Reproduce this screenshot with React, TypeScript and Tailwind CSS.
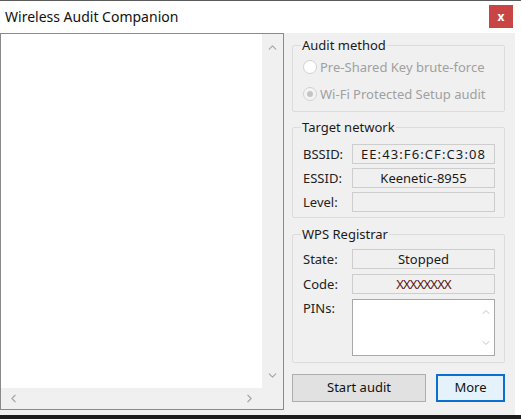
import React from "react";
import { ChevronUp, ChevronDown, ChevronLeft, ChevronRight } from "lucide-react";

const font = { fontFamily: '"Noto Sans", "Open Sans", sans-serif' };

function Field({ text, className = "" }: { text?: string; className?: string }) {
  return (
    <div
      className={
        "w-[143px] h-[20px] border border-[#cdcdcd] bg-[#f0f0f0] flex items-center justify-center text-[13px] text-[#1a1a1a] leading-none " +
        className
      }
    >
      {text}
    </div>
  );
}

function Row({ label, children }: { label: string; children: React.ReactNode }) {
  return (
    <div className="flex items-center">
      <div className="w-[49px] text-[13px] text-[#222] leading-none">{label}</div>
      {children}
    </div>
  );
}

export default function App() {
  return (
    <div className="w-[521px] h-[419px] bg-white overflow-hidden flex flex-col" style={font}>
      <div className="h-px bg-[#5b5b5b] shrink-0" />
      <div className="h-[32px] shrink-0 flex items-start justify-between pl-[5px] pr-[8px] pt-[4px] bg-white">
        <span className="text-[14px] text-[#111] leading-[20px] mt-[2px]">Wireless Audit Companion</span>
        <div className="w-[24px] h-[23px] bg-[#c94545] flex items-center justify-center text-white text-[12px] font-bold leading-none">
          x
        </div>
      </div>
      <div className="w-[515px] h-[382px] shrink-0 bg-[#f0f0f0] flex">
        {/* list box */}
        <div className="w-[284px] h-[377px] border border-[#8a8a8a] bg-white grid grid-cols-[1fr_21px] grid-rows-[1fr_21px]">
          <div className="bg-white" />
          <div className="bg-[#f0f0f0] flex flex-col items-center justify-between pt-[7px] pb-[6px]">
            <ChevronUp size={13} strokeWidth={2.2} color="#a8a8a8" />
            <ChevronDown size={13} strokeWidth={2.2} color="#a8a8a8" />
          </div>
          <div className="bg-[#f0f0f0] flex items-center justify-between px-[6px]">
            <ChevronLeft size={13} strokeWidth={2.2} color="#a8a8a8" />
            <ChevronRight size={13} strokeWidth={2.2} color="#a8a8a8" />
          </div>
          <div className="bg-[#f0f0f0]" />
        </div>

        {/* right panel */}
        <div className="ml-[8px] w-[213px] flex flex-col pt-[4px]">
          <fieldset className="border border-[#dcdcdc] rounded-[2px] h-[75px] px-[10px] m-0">
            <legend className="ml-[-2px] px-[1px] text-[13px] text-[#1a1a1a] leading-[16px]">Audit method</legend>
            <div className="flex items-center mt-[7px]">
              <span className="w-[14px] h-[14px] rounded-full border border-[#d2d2d2] bg-white" />
              <span className="ml-[3px] text-[13px] text-[#a0a0a0] leading-none">Pre-Shared Key brute-force</span>
            </div>
            <div className="flex items-center mt-[13px]">
              <span className="w-[14px] h-[14px] rounded-full border border-[#d2d2d2] bg-[#f4f4f4] flex items-center justify-center">
                <span className="w-[6px] h-[6px] rounded-full bg-[#c4c4c4]" />
              </span>
              <span className="ml-[3px] text-[13px] text-[#a0a0a0] leading-none">Wi-Fi Protected Setup audit</span>
            </div>
          </fieldset>

          <fieldset className="mt-[7px] border border-[#dcdcdc] rounded-[2px] h-[99px] pl-[10px] m-0">
            <legend className="ml-[-2px] px-[1px] text-[13px] text-[#1a1a1a] leading-[16px]">Target network</legend>
            <div className="flex flex-col gap-[4px] mt-[9px]">
              <Row label="BSSID:"><Field text="EE:43:F6:CF:C3:08" className="tracking-[1.1px]" /></Row>
              <Row label="ESSID:"><Field text="Keenetic-8955" /></Row>
              <Row label="Level:"><Field className="bg-[#e6e6e6] h-[19px]" /></Row>
            </div>
          </fieldset>

          <fieldset className="mt-[8px] border border-[#dcdcdc] rounded-[2px] h-[137px] pl-[10px] m-0">
            <legend className="ml-[-2px] px-[1px] text-[13px] text-[#1a1a1a] leading-[16px]">WPS Registrar</legend>
            <div className="flex flex-col gap-[5px] mt-[7px]">
              <Row label="State:"><Field text="Stopped" className="h-[18px]" /></Row>
              <Row label="Code:">
                <Field text="XXXXXXXX" className="h-[19px] text-[#5a1414] text-[12px] tracking-[-0.8px]" />
              </Row>
              <div className="flex items-start">
                <div className="w-[49px] text-[13px] text-[#222] leading-none mt-[3px]">PINs:</div>
                <div className="w-[143px] h-[57px] border border-[#a8a8a8] bg-white flex justify-end">
                  <div className="w-[17px] flex flex-col items-center justify-between py-[6px]">
                    <ChevronUp size={12} strokeWidth={2} color="#c4c4c4" />
                    <ChevronDown size={12} strokeWidth={2} color="#c4c4c4" />
                  </div>
                </div>
              </div>
            </div>
          </fieldset>

          <div className="flex mt-[11px] gap-[10px]">
            <div className="w-[134px] h-[28px] border border-[#adadad] bg-[#e1e1e1] flex items-center justify-center text-[13px] text-[#111]">
              Start audit
            </div>
            <div className="w-[69px] h-[28px] border-2 border-[#0a6fd1] bg-[#e5f1fb] flex items-center justify-center text-[13px] text-[#111]">
              More
            </div>
          </div>
        </div>
      </div>
      <div className="flex-1 bg-[#1c1c1c]" />
    </div>
  );
}
